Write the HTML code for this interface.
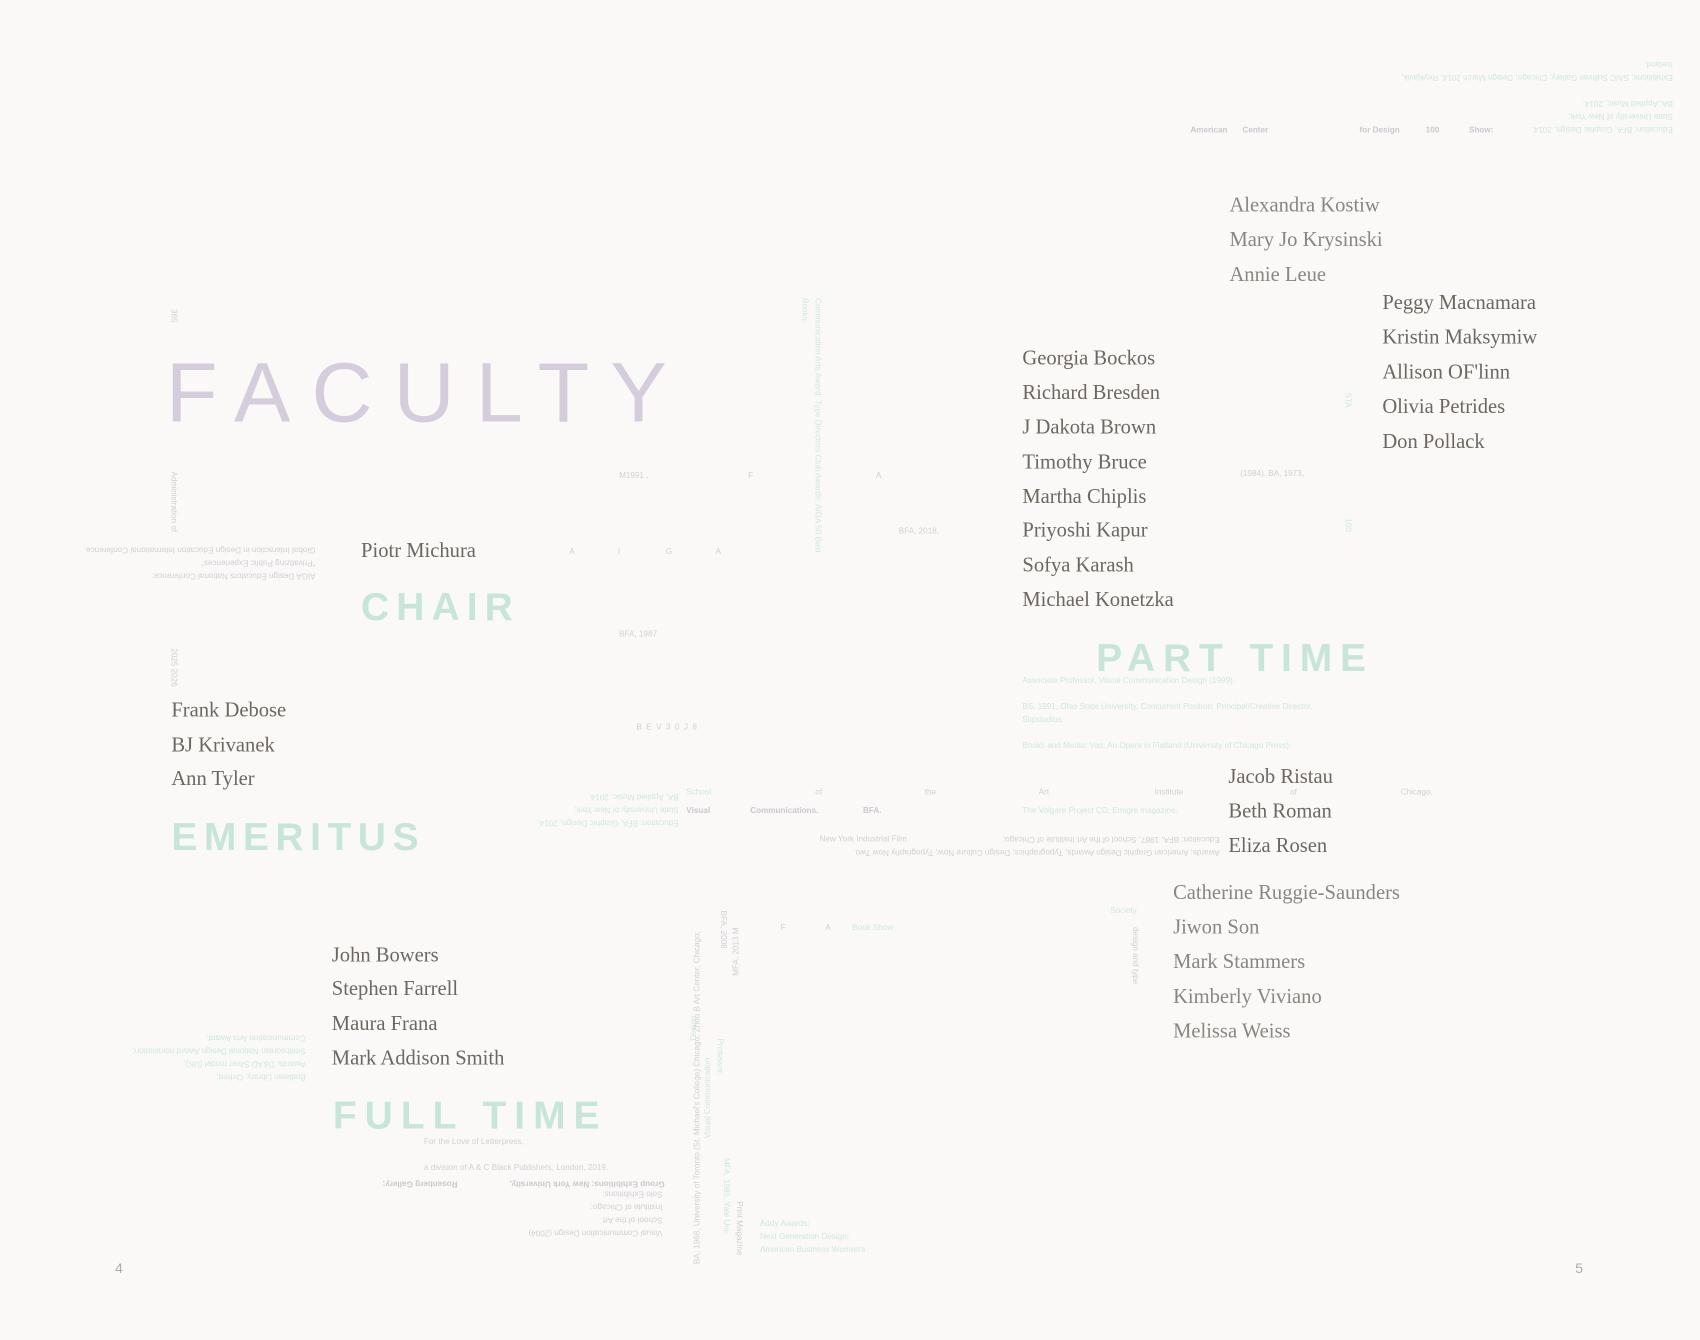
<!DOCTYPE html>
<html><head><meta charset="utf-8"><style>
html,body{margin:0;padding:0;background:#faf9f7;width:1700px;height:1340px;overflow:hidden}
svg{display:block}
.n{font-family:"Liberation Serif",serif;font-size:19px;fill:#6e6761}
.nl{font-family:"Liberation Serif",serif;font-size:19px;fill:#8c8580}
.h{font-family:"Liberation Sans",sans-serif;font-weight:bold;font-size:36px;fill:#c7e6d8}
.s{font-family:"Liberation Sans",sans-serif;font-size:7.5px;fill:#d3ced4}
.m{font-family:"Liberation Sans",sans-serif;font-size:7.5px;fill:#cfe8dc}
.sb{font-family:"Liberation Sans",sans-serif;font-size:7.5px;font-weight:bold;fill:#cdc6cf}
.mb{font-family:"Liberation Sans",sans-serif;font-size:7.5px;font-weight:bold;fill:#cde7da}
</style></head><body>
<svg width="1700" height="1340" viewBox="0 0 1568 1236" xmlns="http://www.w3.org/2000/svg">
<rect width="1568" height="1236" fill="#faf9f7"/>
<text x="153" y="389" font-family="Liberation Sans, sans-serif" font-size="78" fill="#d6cddc" textLength="462" lengthAdjust="spacing">FACULTY</text>
<text class="h" x="333" y="572" textLength="140" lengthAdjust="spacing">CHAIR</text>
<text class="h" x="158" y="784" textLength="228" lengthAdjust="spacing">EMERITUS</text>
<text class="h" x="307" y="1041" textLength="246" lengthAdjust="spacing">FULL TIME</text>
<text class="h" x="1011" y="619" textLength="249" lengthAdjust="spacing">PART TIME</text>

<text class="n" x="333" y="514">Piotr Michura</text>
<text class="n" x="158" y="661">Frank Debose</text>
<text class="n" x="158" y="693">BJ Krivanek</text>
<text class="n" x="158" y="724">Ann Tyler</text>
<text class="n" x="306" y="887">John Bowers</text>
<text class="n" x="306" y="918">Stephen Farrell</text>
<text class="n" x="306" y="950">Maura Frana</text>
<text class="n" x="306" y="982">Mark Addison Smith</text>
<text class="n" x="943" y="336">Georgia Bockos</text>
<text class="n" x="943" y="368">Richard Bresden</text>
<text class="n" x="943" y="400">J Dakota Brown</text>
<text class="n" x="943" y="432">Timothy Bruce</text>
<text class="n" x="943" y="464">Martha Chiplis</text>
<text class="n" x="943" y="495">Priyoshi Kapur</text>
<text class="n" x="943" y="527">Sofya Karash</text>
<text class="n" x="943" y="559">Michael Konetzka</text>
<text class="nl" x="1134" y="195">Alexandra Kostiw</text>
<text class="nl" x="1134" y="227">Mary Jo Krysinski</text>
<text class="nl" x="1134" y="259">Annie Leue</text>
<text class="n" x="1275" y="285">Peggy Macnamara</text>
<text class="n" x="1275" y="317">Kristin Maksymiw</text>
<text class="n" x="1275" y="349">Allison OF'linn</text>
<text class="n" x="1275" y="381">Olivia Petrides</text>
<text class="n" x="1275" y="413">Don Pollack</text>
<text class="n" x="1133" y="722">Jacob Ristau</text>
<text class="n" x="1133" y="754">Beth Roman</text>
<text class="n" x="1133" y="786">Eliza Rosen</text>
<text class="nl" x="1082" y="829">Catherine Ruggie-Saunders</text>
<text class="nl" x="1082" y="861">Jiwon Son</text>
<text class="nl" x="1082" y="893">Mark Stammers</text>
<text class="nl" x="1082" y="925">Kimberly Viviano</text>
<text class="nl" x="1082" y="957">Melissa Weiss</text>

<text x="106" y="1174" font-family="Liberation Sans, sans-serif" font-size="13" fill="#b0aaa8">4</text>
<text x="1453" y="1174" font-family="Liberation Sans, sans-serif" font-size="13" fill="#b0aaa8">5</text>

<g transform="rotate(180 1470 90)">
<text class="m" x="1397" y="63">Education: BFA, Graphic Design, 2014.</text>
<text class="m" x="1397" y="75">State University of New York;</text>
<text class="m" x="1397" y="87">BA, Applied Music, 2014.</text>
<text class="m" x="1397" y="111">Exhibitions: SAIC Sullivan Gallery, Chicago; Design March 2014, Reykjavik,</text>
<text class="m" x="1397" y="123">Iceland.</text>
</g>
<text class="sb" x="1098" y="122">American</text><text class="sb" x="1146" y="122">Center</text><text class="sb" x="1254" y="122">for Design</text><text class="sb" x="1315" y="122">100</text><text class="sb" x="1355" y="122">Show:</text>

<text class="m" x="943" y="630">Associate Professor, Visual Communication Design (1999).</text>
<text class="m" x="943" y="654">BS, 1991, Ohio State University. Concurrent Position: Principal/Creative Director,</text>
<text class="m" x="943" y="666">Slipstudios.</text>
<text class="m" x="943" y="690">Books and Media: Vas: An Opera in Flatland (University of Chicago Press);</text>
<text class="s" x="1144" y="439">(1984). BA, 1973,</text>
<text class="s" x="829" y="492">BFA, 2018,</text>
<text class="s" x="571" y="587">BFA, 1987</text>
<text class="s" x="571" y="441">M1991 ,</text>
<text class="s" x="690" y="441">F</text><text class="s" x="808" y="441">A</text>
<text class="s" x="525" y="511">A</text><text class="s" x="570" y="511">I</text><text class="s" x="614" y="511">G</text><text class="s" x="660" y="511">A</text>
<text class="s" x="587" y="673" letter-spacing="1">B   E   V   3   0   J   8</text>

<text class="m" x="633" y="733">School</text><text class="s" x="752" y="733">of</text><text class="s" x="853" y="733">the</text><text class="s" x="958" y="733">Art</text><text class="s" x="1065" y="733">Institute</text><text class="s" x="1190" y="733">of</text><text class="s" x="1292" y="733">Chicago.</text>
<text class="sb" x="633" y="750">Visual</text><text class="sb" x="692" y="750">Communications.</text><text class="sb" x="796" y="750">BFA.</text>
<text class="m" x="943" y="750">The Volgare Project CD; Emigre magazine.</text>
<text class="s" x="756" y="776">New York Industrial Film</text>
<g transform="rotate(180 950 780)">
<text class="s" x="775" y="776">Awards: American Graphic Design Awards; Typographics; Design Culture Now; Typography Now Two.</text>
<text class="s" x="775" y="788">Education: BFA, 1987, School of the Art Institute of Chicago;</text>
</g>
<g transform="rotate(180 552 745)">
<text class="m" x="478" y="733">Education: BFA, Graphic Design, 2014.</text>
<text class="m" x="478" y="745">State University of New York;</text>
<text class="m" x="478" y="757">BA, Applied Music, 2014.</text>
</g>
<g transform="rotate(180 168 517)">
<text class="s" x="45" y="505">AIGA Design Educators National Conference:</text>
<text class="s" x="45" y="517">"Privatizing Public Experiences"</text>
<text class="s" x="45" y="529">Global Interaction in Design Education International Conference.</text>
</g>
<g transform="rotate(180 190 968)">
<text class="m" x="98" y="945">Bodleian Library, Oxford;</text>
<text class="m" x="98" y="957">Awards: D&amp;AD Silver model (UK),</text>
<text class="m" x="98" y="969">Smithsonian National Design Award nomination;</text>
<text class="m" x="98" y="981">Communication Arts Award.</text>
</g>
<text class="s" x="391" y="1055">For the Love of Letterpress,</text>
<text class="s" x="391" y="1079">a division of A &amp; C Black Publishers, London, 2019.</text>
<g transform="rotate(180 480 1115)">
<text class="s" x="349" y="1095">Visual    Communication      Design      (2004)</text>
<text class="s" x="349" y="1107">School of the Art</text>
<text class="s" x="349" y="1119">Institute of Chicago:</text>
<text class="s" x="349" y="1131">Solo Exhibitions:</text>
<text class="sb" x="347" y="1140">Group Exhibitions: New York University,</text>
<text class="sb" x="538" y="1140">Rosenberg Gallery;</text>
</g>
<text class="m" x="701" y="1131">Addy Awards;</text>
<text class="m" x="701" y="1143">Next Generation Design;</text>
<text class="m" x="701" y="1155">American Business Women's</text>
<text class="m" x="786" y="858">Book Show</text><text class="s" x="720" y="858">F</text><text class="s" x="761" y="858">A</text>

<text class="m" transform="translate(752,275) rotate(90)">Communication Arts Award; Type Directors Club Awards; AIGA 50 Best</text>
<text class="m" transform="translate(740,275) rotate(90)">Books;</text>
<text class="s" transform="translate(158,435) rotate(90)">Administration of</text>
<text class="s" transform="translate(158,285) rotate(90)">365</text>
<text class="s" transform="translate(158,598) rotate(90)">2025 2026</text>
<text class="m" transform="translate(1241,362) rotate(90)">STA</text>
<text class="m" transform="translate(1241,478) rotate(90)">100</text>
<text class="s" transform="translate(645,1166) rotate(-90)">BA, 1968, University of Toronto (St. Michael's College)   Chicago; Zhou B Art Center, Chicago;</text>
<text class="m" transform="translate(655,1050) rotate(-90)">Visual Communication</text>
<text class="m" transform="translate(642,960) rotate(-90)">Design</text>
<text class="m" transform="translate(662,958) rotate(90)">Professor,</text>
<text class="s" transform="translate(681,900) rotate(-90)">MFA, 2013 M</text>
<text class="s" transform="translate(665,840) rotate(90)">BFA, 2006</text>
<text class="m" transform="translate(668,1068) rotate(90)">MFA, 1985, Yale Uni-</text>
<text class="s" transform="translate(680,1108) rotate(90)">Print Magazine</text>
<text class="s" transform="translate(1045,855) rotate(90)">design and type</text>
<text class="m" x="1024" y="842">Society</text>
</svg>
</body></html>
